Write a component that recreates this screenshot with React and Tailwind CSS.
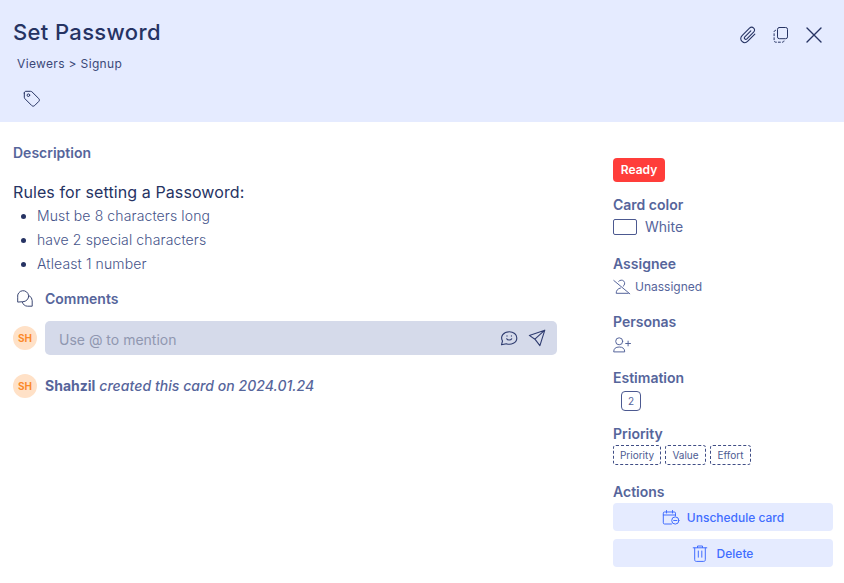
import React from "react";

function Icon({ w = 18, h = 18, vb, sw = 1, className = "", children }) {
  return (
    <svg
      width={w}
      height={h}
      viewBox={vb || `0 0 ${w} ${h}`}
      fill="none"
      stroke="currentColor"
      strokeWidth={sw}
      strokeLinecap="round"
      strokeLinejoin="round"
      className={"block shrink-0 " + className}
    >
      {children}
    </svg>
  );
}

function Avatar() {
  return (
    <div className="flex h-6 w-6 shrink-0 items-center justify-center rounded-full bg-[#ffe1c7] text-[10px] font-bold text-[#fb8a2c]">
      SH
    </div>
  );
}

function Heading({ className = "", children }) {
  return <h3 className={"h-5 text-sm leading-5 font-semibold text-[#56659b] " + className}>{children}</h3>;
}

function Chip({ className, children }) {
  return (
    <span
      className={
        "flex h-5 items-center justify-center rounded-[3px] border border-dashed border-[#3f4d85] text-[10px] text-[#4d5b92] " +
        className
      }
    >
      {children}
    </span>
  );
}

function Header() {
  return (
    <header className="flex h-[122px] justify-between bg-[#e5ebff] text-[#263363]">
      <div className="pl-[13px]">
        <h1 className="mt-4 h-8 text-[22px] leading-8 font-medium tracking-[0.36px]">Set Password</h1>
        <div className="mt-2 ml-1 h-4 text-xs leading-4 tracking-[0.35px] text-[#3b4878]">Viewers &gt; Signup</div>
        <Icon className="mt-[18px] ml-[10px]">
          <path d="M1.3 3v4.2c0 .6.2 1.1.6 1.500l6.800 6.800c.9.900 2.100.900 3 0l4-4c.9-.9.900-2.100 0-3L9 1.900c-.4-.4-.9-.6-1.500-.6H3C2 1.300 1.300 2 1.300 3z" />
          <circle cx="5.400" cy="5.200" r="1.300" />
        </Icon>
      </div>
      <div className="mt-[26px] mr-[21px] flex h-[18px] items-center gap-[15px]">
        <Icon sw={1.1}>
          <path d="M11.800 4.800 5.800 10.800c-1.500 1.500.6 3.500 2.100 2.100l6.700-6.700c2.900-2.900-1.300-6.800-4.100-4L3.100 9.600c-4 4 1.900 9.500 5.700 5.600l7-7" />
        </Icon>
        <Icon>
          <rect x="5.500" y="1.500" width="10" height="11.200" rx="1.800" />
          <path d="M3.600 4.300c-1 .1-1.500.7-1.500 1.700v8.500c0 1.100.6 1.700 1.700 1.700h6.500c1 0 1.600-.4 1.700-1.300" strokeDasharray="2 2" />
        </Icon>
        <Icon sw={1.4}>
          <path d="M2 2l14 14M16 2 2 16" />
        </Icon>
      </div>
    </header>
  );
}

function Main() {
  return (
    <main className="w-[544px] pt-[21px] text-[#56659b]">
      <Heading>Description</Heading>
      <p className="mt-[17px] h-6 text-base leading-6 tracking-[0.1px] text-[#263363]">
        Rules for setting a Passoword:
      </p>
      <ul className="text-sm leading-6 font-light tracking-[0.12px] text-[#46548a]">
        {["Must be 8 characters long", "have 2 special characters", "Atleast 1 number"].map((rule) => (
          <li key={rule} className="flex h-6 items-center pl-[8px]">
            <span className="mr-[11px] h-[5px] w-[5px] rounded-full bg-[#263363]" />
            {rule}
          </li>
        ))}
      </ul>
      <div className="mt-[13px] flex h-5 items-center">
        <Icon className="mr-[11px] ml-[3px] text-[#3d4974]">
          <path d="M1.700 11.700V7.200A5.500 5.500 0 1 1 7.200 11.700z" />
          <path d="M13.200 5.700a5.500 5.500 0 0 1 3 5v5.500h-4.700a5.500 5.500 0 0 1-5.100-3.900" />
        </Icon>
        <Heading>Comments</Heading>
      </div>
      <div className="mt-3 flex items-center gap-2">
        <Avatar />
        <div className="flex h-[34px] w-[512px] items-center rounded-[5px] bg-[#d5daea] pr-[11px] pl-[14px] text-[#2f3c70]">
          <span className="flex-1 pt-1 text-sm leading-5 text-[#9097b0]">Use @ to mention</span>
          <Icon sw={1.1} className="mr-[10px]">
            <path d="M1.500 15.800 2.500 12C-.1 7.200 3.500 2.700 9.300 2.700c4.200 0 7.500 2.600 7.500 6.200 0 5.100-5.700 7.500-10.500 5.800z" />
            <path d="M6.700 9.700c.8 1.800 4.200 1.800 5 0M7 6.800v.3M11.400 6.800v.3" />
          </Icon>
          <Icon sw={1.1}>
            <path d="M16.800 1.200 1.300 6.400l5.600 3.800 5 6.400zM16.800 1.200 6.900 10.200" />
          </Icon>
        </div>
      </div>
      <div className="mt-[19px] flex h-6 items-center gap-2 text-sm">
        <Avatar />
        <p className="whitespace-nowrap">
          <b className="font-bold">Shahzil</b> <i className="font-medium tracking-[0.05px]">created this card on 2024.01.24</i>
        </p>
      </div>
    </main>
  );
}

function Sidebar() {
  return (
    <aside className="w-[220px] pt-9 text-[#56659b]">
      <div className="flex h-6 w-[52px] items-center justify-center rounded bg-[#ff3d3a] text-xs font-semibold text-white">
        Ready
      </div>
      <Heading className="mt-[13px]">Card color</Heading>
      <div className="mt-[2px] flex h-5 items-center gap-2 text-sm">
        <span className="h-4 w-6 rounded-[2px] border border-[#4c5990] bg-white" />
        White
      </div>
      <Heading className="mt-[17px]">Assignee</Heading>
      <div className="mt-[3px] flex h-5 items-center gap-1 text-xs">
        <Icon>
          <path d="M.8 2.500 16.800 15.800M5.700 3.300a3.400 3.400 0 1 1 4.500 5M7.500 10c-2.700.6-4.300 2.300-4.300 5.300h12" />
        </Icon>
        Unassigned
      </div>
      <Heading className="mt-[15px]">Personas</Heading>
      <Icon className="mt-1">
        <circle cx="6.200" cy="5.300" r="3.500" />
        <path d="M.7 15.500c0-3 2-4.500 5.500-4.500s5.500 1.500 5.500 4.500zM12.700 7.500h4.800M15.100 5.100v4.800" />
      </Icon>
      <Heading className="mt-[14px]">Estimation</Heading>
      <div className="mt-[3px] ml-2 flex h-5 w-5 items-center justify-center rounded-[4px] border border-[#4c5990] text-[10px]">
        2
      </div>
      <Heading className="mt-[13px]">Priority</Heading>
      <div className="mt-px flex gap-1">
        <Chip className="w-12">Priority</Chip>
        <Chip className="w-[41px]">Value</Chip>
        <Chip className="w-[41px]">Effort</Chip>
      </div>
      <Heading className="mt-[17px]">Actions</Heading>
      <button className="mt-px flex h-7 w-full items-center justify-center gap-[7px] rounded bg-[#e5ebff] pt-px text-xs font-medium text-[#416dff]">
        <Icon>
          <path d="M9.500 15H2.500c-.8 0-1.200-.4-1.200-1.200V4.200c0-.8.4-1.200 1.200-1.200h9.800c.8 0 1.200.4 1.200 1.200v2.700M1.300 6h12.200M4.500 1.500V4M10.500 1.500V4" />
          <circle cx="13.300" cy="11.500" r="3.600" />
          <path d="M11.700 11.500h3.200" />
        </Icon>
        Unschedule card
      </button>
      <button className="mt-2 flex h-7 w-full items-center justify-center gap-[8px] rounded bg-[#e5ebff] pt-px pr-[2px] text-xs font-medium text-[#416dff]">
        <Icon>
          <path d="M2.200 2.800h13.600M6.500 2.500V1h5v1.500M3.700 3v11.800c0 1 .6 1.600 1.600 1.600h7.400c1 0 1.600-.6 1.600-1.600V3M7.300 6v6.200M10.800 6v6.200" />
        </Icon>
        Delete
      </button>
    </aside>
  );
}

export default function App() {
  return (
    <div className="h-[583px] w-[844px] overflow-hidden bg-white font-['Inter','Liberation_Sans',sans-serif]">
      <Header />
      <div className="flex justify-between pr-[11px] pl-[13px]">
        <Main />
        <Sidebar />
      </div>
    </div>
  );
}
